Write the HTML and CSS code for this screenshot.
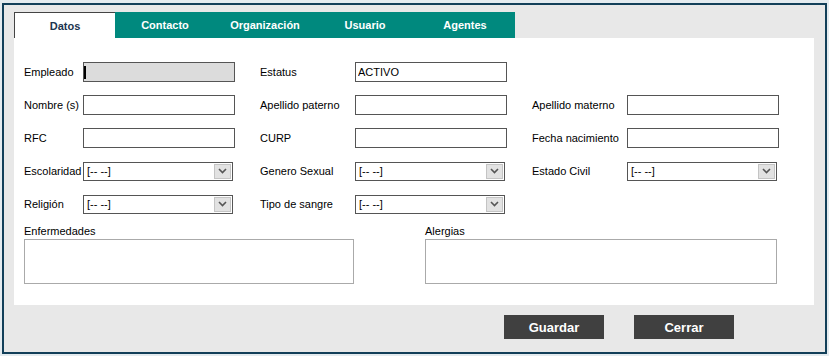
FILE: index.html
```html
<!DOCTYPE html>
<html lang="es">
<head>
    <meta charset="UTF-8">
    <meta name="viewport" content="width=device-width, initial-scale=1.0">
    <title>Datos del empleado</title>
    <link rel="stylesheet" href="styles.css">
</head>
<body>
    <div class="frame">
        <ul class="tabs">
            <li class="tab active">Datos</li>
            <li class="tab">Contacto</li>
            <li class="tab">Organización</li>
            <li class="tab">Usuario</li>
            <li class="tab">Agentes</li>
        </ul>
        <div class="panel">
            <div class="form">
                <label class="lbl">Empleado</label>
                <span class="caret-wrap"><input class="txt disabled" type="text"></span>
                <label class="lbl">Estatus</label>
                <input class="txt" type="text" value="ACTIVO">
                <span></span><span></span>

                <label class="lbl">Nombre (s)</label>
                <input class="txt" type="text">
                <label class="lbl">Apellido paterno</label>
                <input class="txt" type="text">
                <label class="lbl">Apellido materno</label>
                <input class="txt" type="text">

                <label class="lbl">RFC</label>
                <input class="txt" type="text">
                <label class="lbl">CURP</label>
                <input class="txt" type="text">
                <label class="lbl">Fecha nacimiento</label>
                <input class="txt" type="text">

                <label class="lbl">Escolaridad</label>
                <div class="sel"><span class="val">[-- --]</span><span class="arrow"><svg width="9" height="6" viewBox="0 0 9 6"><path d="M1 1l3.5 3.5L8 1" fill="none" stroke="#555" stroke-width="1.6"/></svg></span></div>
                <label class="lbl">Genero Sexual</label>
                <div class="sel"><span class="val">[-- --]</span><span class="arrow"><svg width="9" height="6" viewBox="0 0 9 6"><path d="M1 1l3.5 3.5L8 1" fill="none" stroke="#555" stroke-width="1.6"/></svg></span></div>
                <label class="lbl">Estado Civil</label>
                <div class="sel"><span class="val">[-- --]</span><span class="arrow"><svg width="9" height="6" viewBox="0 0 9 6"><path d="M1 1l3.5 3.5L8 1" fill="none" stroke="#555" stroke-width="1.6"/></svg></span></div>

                <label class="lbl">Religión</label>
                <div class="sel"><span class="val">[-- --]</span><span class="arrow"><svg width="9" height="6" viewBox="0 0 9 6"><path d="M1 1l3.5 3.5L8 1" fill="none" stroke="#555" stroke-width="1.6"/></svg></span></div>
                <label class="lbl">Tipo de sangre</label>
                <div class="sel"><span class="val">[-- --]</span><span class="arrow"><svg width="9" height="6" viewBox="0 0 9 6"><path d="M1 1l3.5 3.5L8 1" fill="none" stroke="#555" stroke-width="1.6"/></svg></span></div>
            </div>
            <div class="notes">
                <div class="note wide-a">
                    <label class="lbl">Enfermedades</label>
                    <textarea class="area"></textarea>
                </div>
                <div class="note wide-b">
                    <label class="lbl">Alergias</label>
                    <textarea class="area"></textarea>
                </div>
            </div>
        </div>
        <div class="actions">
            <button class="btn">Guardar</button>
            <button class="btn">Cerrar</button>
        </div>
    </div>
</body>
</html>
```

FILE: styles.css
```css
*{
    padding: 0;
    margin: 0;
    list-style: none;
    box-sizing: border-box;
}
html, body{
    background-color: #e4ebef;
    font-family: "Liberation Sans", Arial, sans-serif;
    font-size: 11px;
    color: #000;
}
.frame{
    margin: 3px 0 0 2px;
    width: 825px;
    height: 351px;
    border: 2px solid #123f59;
    background-color: #e8e8e8;
    padding: 7px 0 0 10px;
}
.tabs{
    display: flex;
    height: 26px;
}
.tab{
    width: 100px;
    background-color: #00897e;
    color: #fff;
    font-weight: bold;
    font-size: 11px;
    text-align: center;
    line-height: 27px;
}
.tab.active{
    width: 101px;
    background-color: #fff;
    color: #1c3550;
    border-top: 1px solid #444;
    border-left: 1px solid #444;
    line-height: 26px;
}
.panel{
    width: 800px;
    height: 267px;
    background-color: #fff;
    padding: 24px 0 0 10px;
}
.form{
    display: grid;
    grid-template-columns: 59px 177px 95px 177px 95px 152px;
    grid-auto-rows: 20px;
    row-gap: 13px;
    align-items: center;
}
.txt{
    width: 152px;
    height: 20px;
    border: 1px solid #555;
    background-color: #fff;
    font-family: inherit;
    font-size: 11px;
    padding: 0 2px;
    color: #000;
    outline: none;
}
.txt.disabled{
    background-color: #dcdcdc;
}
.caret-wrap{
    position: relative;
    display: block;
    height: 20px;
}
.caret-wrap::after{
    content: "";
    position: absolute;
    left: 1px;
    top: 4px;
    width: 2px;
    height: 13px;
    background-color: #000;
}
.sel{
    display: flex;
    width: 150px;
    height: 19px;
    border: 1px solid #555;
    background-color: #fff;
    padding: 1px;
}
.sel .val{
    flex: 1;
    line-height: 15px;
    padding-left: 2px;
}
.sel .arrow{
    width: 17px;
    height: 15px;
    background-color: #e2e2e2;
    border: 1px solid #c4c4c4;
    display: flex;
    align-items: center;
    justify-content: center;
}
.notes{
    display: flex;
    gap: 71px;
    margin-top: 11px;
}
.note{
    display: flex;
    flex-direction: column;
}
.note .lbl{
    line-height: 13px;
    margin-bottom: 1px;
}
.wide-a{
    width: 330px;
}
.wide-b{
    width: 352px;
}
.area{
    height: 45px;
    border: 1px solid #aaa;
    resize: none;
    outline: none;
}
.actions{
    display: flex;
    gap: 30px;
    padding: 10px 0 0 490px;
}
.btn{
    width: 100px;
    height: 24px;
    border: none;
    background-color: #404040;
    color: #fff;
    font-family: inherit;
    font-weight: bold;
    font-size: 13px;
}
```
